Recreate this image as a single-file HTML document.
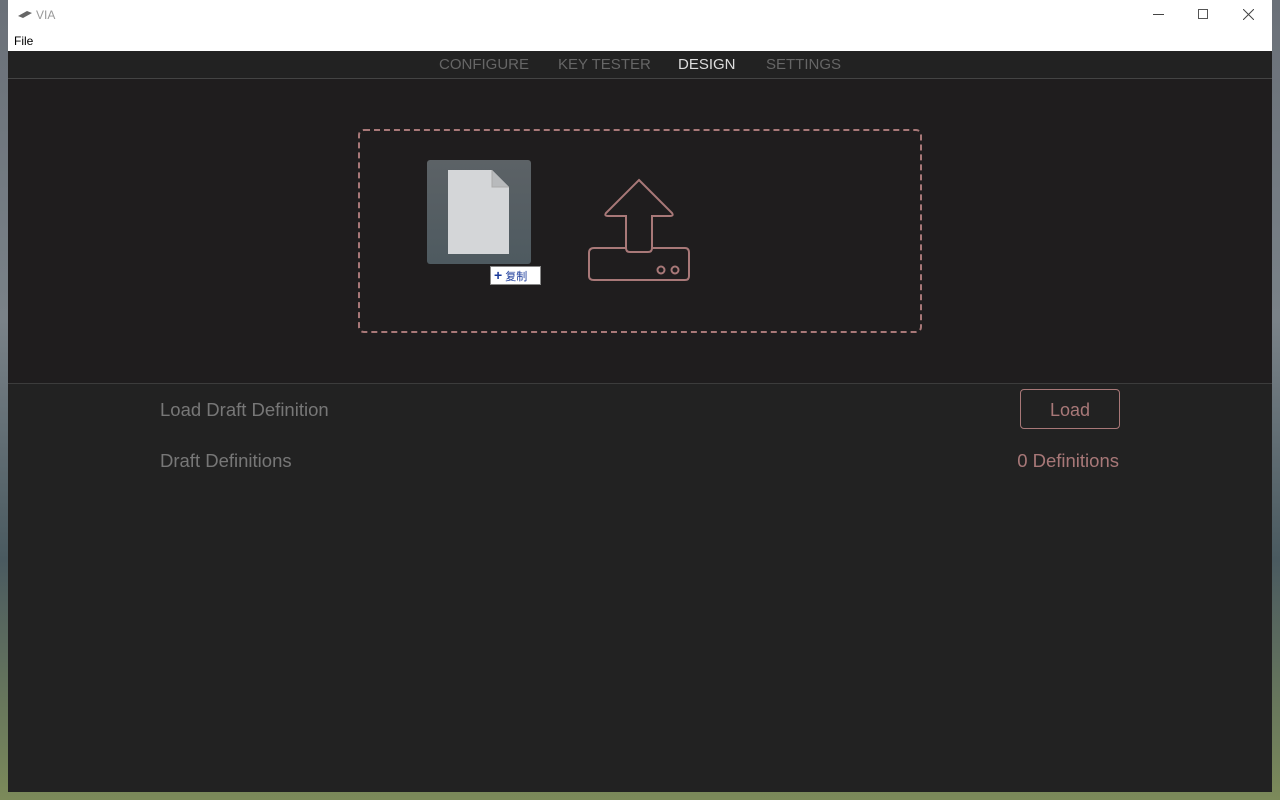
<!DOCTYPE html>
<html><head><meta charset="utf-8"><style>
*{margin:0;padding:0;box-sizing:border-box}
body{width:1280px;height:800px;overflow:hidden;position:relative;background:linear-gradient(180deg,#6a7078 0%,#7a8288 40%,#4a5a60 70%,#7c8a5a 100%);font-family:"Liberation Sans",sans-serif}
.win{position:absolute;left:8px;top:0;width:1264px;height:792px;background:#222;}
.title{position:absolute;left:0;top:0;width:1264px;height:31px;background:#fff;}
.menu{position:absolute;left:0;top:31px;width:1264px;height:20px;background:#fff;font-size:12px;color:#000;padding-left:6px;line-height:20px}
.nav{position:absolute;left:0;top:51px;width:1264px;height:28px;background:#222;border-bottom:1px solid #444;font-size:15px;color:#666;}
.nav span{position:absolute;top:5px;font-family:"Liberation Sans",sans-serif}
.zone{position:absolute;left:0;top:79px;width:1264px;height:305px;background:#1f1d1e;border-bottom:1px solid #3c3c3c}
.lbl{position:absolute;font-size:18.5px;color:#777}
</style></head><body>
<div class="win">
 <div class="title">
  <svg style="position:absolute;left:9px;top:10px" width="16" height="10"><path d="M1 6 L10 1 L15 3 L6 8 Z" fill="#666"/></svg>
  <span style="position:absolute;left:28px;top:8px;font-size:12px;color:#999">VIA</span>
  <div style="position:absolute;left:1145px;top:14px;width:11px;height:1px;background:#444"></div>
  <div style="position:absolute;left:1190px;top:9px;width:10px;height:10px;border:1px solid #555"></div>
  <svg style="position:absolute;left:1235px;top:9px" width="11" height="11"><path d="M0 0L11 11M11 0L0 11" stroke="#444" stroke-width="1"/></svg>
 </div>
 <div class="menu">File</div>
 <div class="nav">
  <span style="left:431px">CONFIGURE</span>
  <span style="left:550px">KEY TESTER</span>
  <span style="left:670px;color:#ddd">DESIGN</span>
  <span style="left:758px">SETTINGS</span>
 </div>
 <div class="zone">
  <div style="position:absolute;left:350px;top:50px;width:564px;height:204px;border:2px dashed #a87878;border-radius:6px"></div>
  <div style="position:absolute;left:419px;top:81px;width:104px;height:104px;background:linear-gradient(#5c6266,#4e5a60);border-radius:3px"></div>
  <svg style="position:absolute;left:439px;top:90px" width="64" height="86"><path d="M1 1H45L62 18V85H1Z" fill="#d4d6d8"/><path d="M45 1V18H62" fill="#b8babc" stroke="#aaa"/></svg>
  <div style="position:absolute;left:482px;top:187px;width:51px;height:19px;background:#fff;border:1px solid #888;font-size:11px;color:#1a3a9a;line-height:17px;padding-left:3px;font-family:'Liberation Sans','Noto Sans CJK SC',sans-serif"><b style="font-size:14px">+</b> 复制</div>
  <svg style="position:absolute;left:578px;top:99px" width="106" height="106" fill="none" stroke="#a87878" stroke-width="2">
   <path d="M53 2 L86 35 Q88 38 84 38 H66 V70 Q66 74 62 74 H44 Q40 74 40 70 V38 H22 Q18 38 20 35 Z"/>
   <path d="M40 70 H8 Q3 70 3 75 V98 Q3 102 8 102 H99 Q103 102 103 98 V75 Q103 70 99 70 H66"/>
   <circle cx="75" cy="92" r="3.5"/><circle cx="89" cy="92" r="3.5"/>
  </svg>
 </div>
 <div class="lbl" style="left:152px;top:399px">Load Draft Definition</div>
 <div class="lbl" style="left:152px;top:450px">Draft Definitions</div>
 <div style="position:absolute;left:1012px;top:389px;width:100px;height:40px;border:1px solid #a87878;border-radius:4px;color:#a87878;font-size:18px;text-align:center;line-height:40px">Load</div>
 <div style="position:absolute;right:153px;top:450px;font-size:18.5px;color:#a87878">0 Definitions</div>
</div>
</body></html>
